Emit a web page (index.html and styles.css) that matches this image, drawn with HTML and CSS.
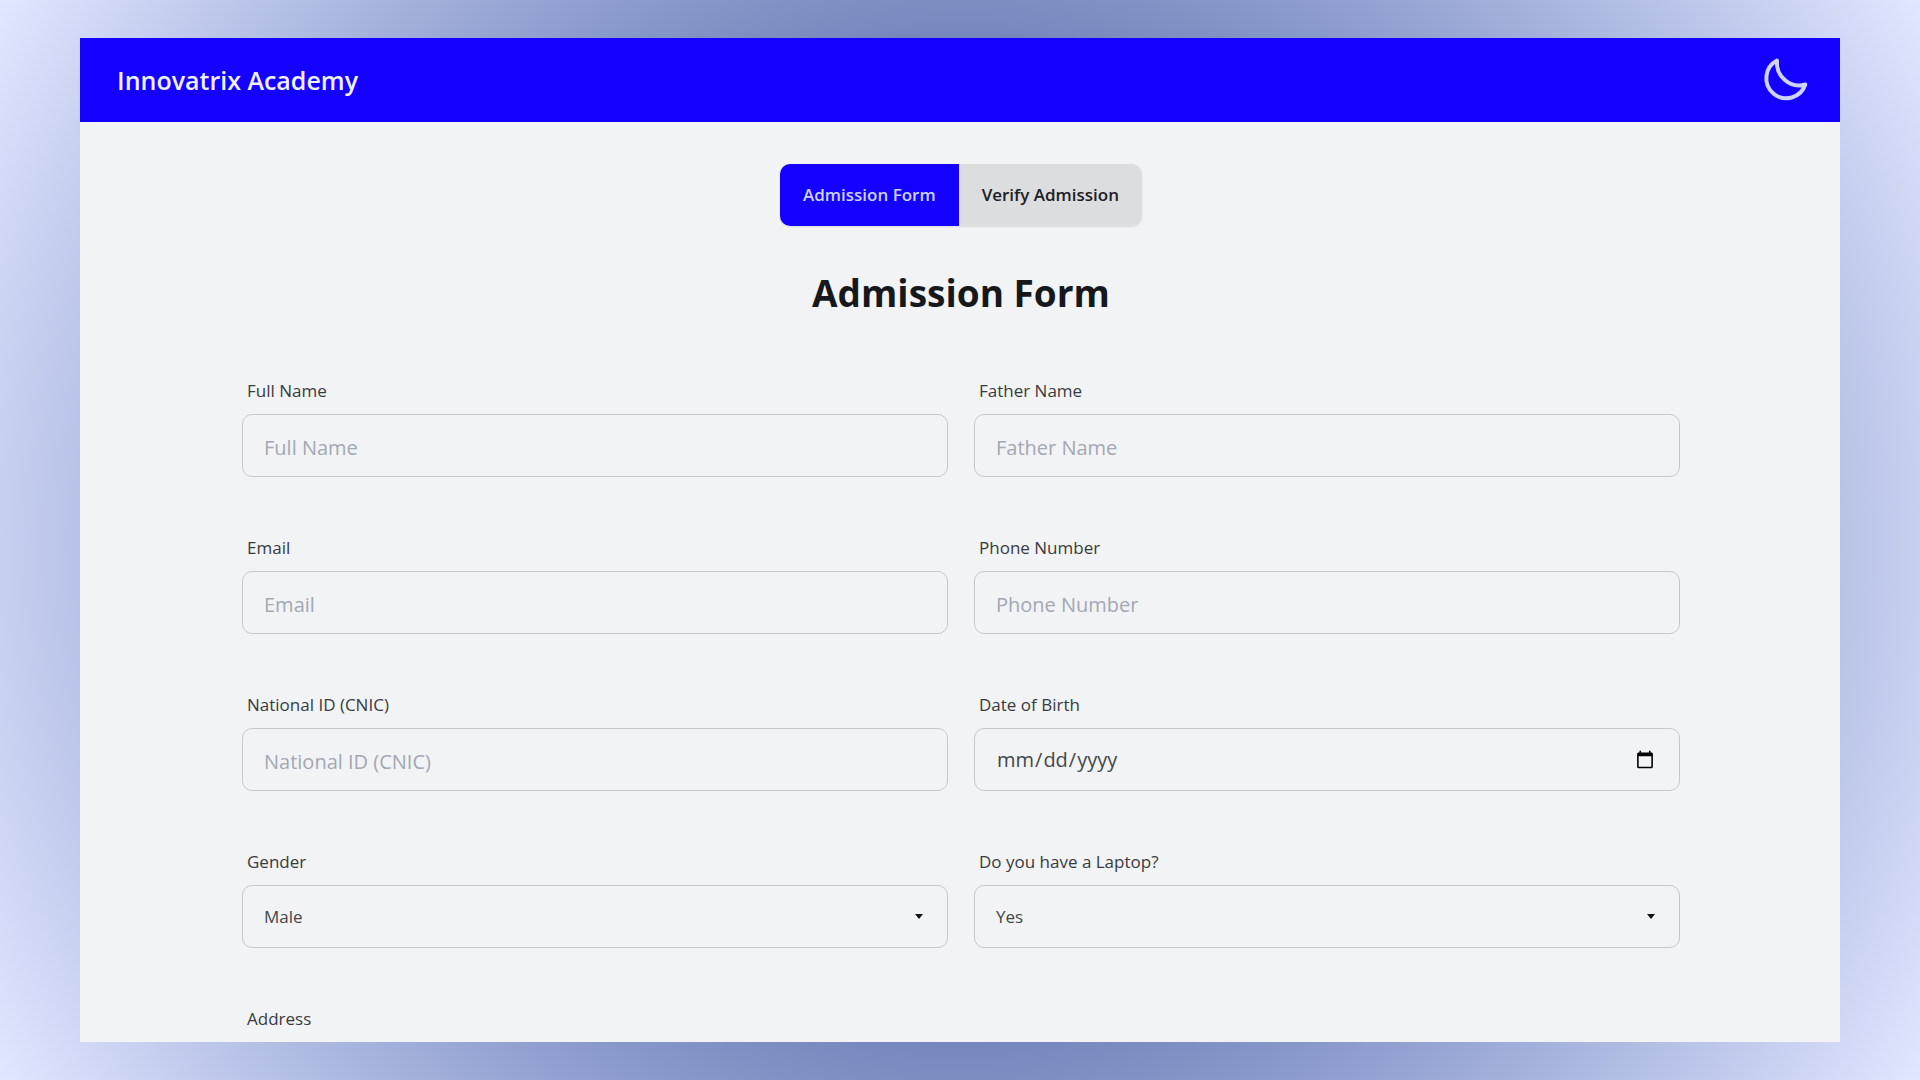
FILE: index.html
```html
<!DOCTYPE html>
<html lang="en">
<head>
<meta charset="utf-8">
<meta name="viewport" content="width=device-width, initial-scale=1">
<title>Innovatrix Academy</title>
<link rel="stylesheet" href="styles.css">
</head>
<body>
<div class="frame">
  <header class="navbar">
    <a class="brand" href="#">Innovatrix Academy</a>
    <button class="theme-toggle" type="button" aria-label="Toggle theme">
      <svg class="moon" viewBox="0 0 48 48" aria-hidden="true">
        <path d="M15 4.500A20 20 0 1 0 43.300 28.500C28 33 13.500 20 15 4.500Z"/>
      </svg>
    </button>
  </header>
  <main class="content">
    <nav class="tabs">
      <button class="tab tab-active" type="button">Admission Form</button>
      <button class="tab" type="button">Verify Admission</button>
    </nav>
    <h1 class="title">Admission Form</h1>
    <form class="form">
      <div class="field">
        <label class="label" for="name">Full Name</label>
        <input class="control" id="name" type="text" placeholder="Full Name">
      </div>
      <div class="field">
        <label class="label" for="father">Father Name</label>
        <input class="control" id="father" type="text" placeholder="Father Name">
      </div>
      <div class="field">
        <label class="label" for="email">Email</label>
        <input class="control" id="email" type="email" placeholder="Email">
      </div>
      <div class="field">
        <label class="label" for="phone">Phone Number</label>
        <input class="control" id="phone" type="tel" placeholder="Phone Number">
      </div>
      <div class="field">
        <label class="label" for="cnic">National ID (CNIC)</label>
        <input class="control" id="cnic" type="text" placeholder="National ID (CNIC)">
      </div>
      <div class="field">
        <label class="label" for="dob">Date of Birth</label>
        <input class="control control-date" id="dob" type="date">
      </div>
      <div class="field">
        <label class="label" for="gender">Gender</label>
        <select class="control select" id="gender"><option>Male</option><option>Female</option></select>
      </div>
      <div class="field">
        <label class="label" for="laptop">Do you have a Laptop?</label>
        <select class="control select" id="laptop"><option>Yes</option><option>No</option></select>
      </div>
      <div class="field field-wide">
        <label class="label" for="address">Address</label>
        <input class="control" id="address" type="text" placeholder="Address">
      </div>
    </form>
  </main>
</div>
</body>
</html>
```
FILE: styles.css
```css
* {
  box-sizing: border-box;
}

body {
  margin: 0;
  height: 100vh;
  padding: 38px 80px;
  background: radial-gradient(circle at center, #3a519b 20%, #788abf 47%, #9aa8d6 65%, #bcc6e9 82%, #e0e7ff 100%);
  color: #16181c;
  font-family: "Open Sans", "Noto Sans", sans-serif;
}

.frame {
  height: 100%;
  overflow-y: auto;
  scrollbar-width: none;
  background: #f2f3f5;
}

.navbar {
  display: flex;
  align-items: center;
  justify-content: space-between;
  min-height: 84px;
  padding: 0 30px 0 37px;
  background: #1400ff;
}

.brand {
  color: #eef0ff;
  font-size: 25px;
  font-weight: 600;
  text-decoration: none;
}

.theme-toggle {
  display: flex;
  padding: 0;
  border: 0;
  background: none;
}

.moon {
  width: 48px;
  height: 48px;
  fill: none;
  stroke: #ccd3ff;
  stroke-width: 4;
  stroke-linejoin: round;
}

.content {
  padding: 42px 160px 40px 162px;
}

.tabs {
  display: flex;
  width: fit-content;
  margin: 0 auto;
  overflow: hidden;
  border-radius: 10px;
  box-shadow: 0 1px 2px rgb(0 0 0 / 10%);
}

.tab {
  height: 62px;
  padding: 0 23px 2px;
  border: 0;
  background: #dcddde;
  color: #1d2024;
  font: inherit;
  font-size: 17px;
  font-weight: 600;
}

.tab-active {
  background: #1400ff;
  color: #ccd3ff;
}

.title {
  margin: 40px 0 59px;
  font-size: 37px;
  font-weight: 700;
  line-height: 54px;
  text-align: center;
}

.form {
  display: grid;
  grid-template-columns: 1fr 1fr;
  gap: 59px 26px;
}

.field {
  display: flex;
  flex-direction: column;
  gap: 12px;
}

.field-wide {
  grid-column: 1 / -1;
}

.label {
  padding-left: 5px;
  color: #393b3f;
  font-size: 17px;
  line-height: 23px;
}

.control {
  width: 100%;
  height: 63px;
  padding: 3px 21px 0;
  border: 1px solid #c6c8cb;
  border-radius: 10px;
  background: transparent;
  color: #45474b;
  font: inherit;
  font-size: 20px;
}

.control::placeholder {
  color: #a3a8b2;
}

.control-date {
  padding: 0 22px 0 21px;
}

.select {
  appearance: none;
  padding: 0 21px 1px;
  background: url("data:image/svg+xml,%3Csvg xmlns='http://www.w3.org/2000/svg' width='8' height='5'%3E%3Cpath d='M0 0h8L4 5z' fill='%23101214'/%3E%3C/svg%3E") no-repeat right 24px center;
  font-size: 17px;
}
```
